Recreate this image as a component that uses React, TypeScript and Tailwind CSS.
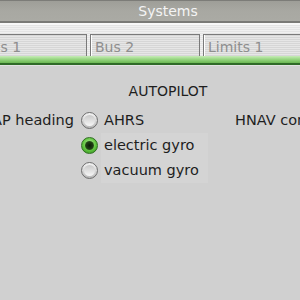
import React from "react";

function Radio({ on }: { on?: boolean }) {
  if (on) {
    return (
      <div className="w-[17px] h-[17px] rounded-full border border-[#2f6e22] bg-[radial-gradient(circle_at_50%_40%,#b6f09a_0%,#5fc23e_55%,#2f8a1c_100%)] flex items-center justify-center shrink-0">
        <div className="w-[9px] h-[9px] rounded-full bg-[radial-gradient(circle,#0c1a08_0%,#1f3d14_55%,#4a8a30_100%)]" />
      </div>
    );
  }
  return (
    <div className="w-[17px] h-[17px] rounded-full border border-[#6e6e6e] bg-[linear-gradient(180deg,#f4f4f4_0%,#d8d8d8_50%,#b8b8b8_100%)] shrink-0 flex items-center justify-center">
      <div className="w-[11px] h-[11px] rounded-full bg-[linear-gradient(180deg,#c8c8c8_0%,#e4e4e4_60%,#f6f6f6_100%)]" />
    </div>
  );
}

export default function App() {
  const font = { fontFamily: '"DejaVu Sans", "Liberation Sans", sans-serif' };
  return (
    <div className="w-[300px] h-[300px] overflow-hidden bg-[#d0d0d0] flex flex-col text-[14.5px]" style={font}>
      {/* title bar */}
      <div className="h-[21px] shrink-0 border-t border-[#7c7c78] bg-[linear-gradient(180deg,#9e9e98_0%,#a8a8a2_50%,#aaaaa4_100%)] flex items-center justify-center pl-[36px]">
        <span className="text-[#f4f4f4] leading-none text-[14px]">Systems</span>
      </div>
      <div className="h-[2px] shrink-0 bg-[#7a7a76]" />
      <div className="h-[2px] shrink-0 bg-[#f8f8f8]" />
      {/* tab strip */}
      <div className="h-[31px] shrink-0 bg-[repeating-linear-gradient(180deg,#e4e4e4_0px,#e4e4e4_1px,#f0f0f0_1px,#f0f0f0_2px)] flex items-end">
        <div className="flex gap-[3px] -ml-[23px] h-[22px]">
          {["Bus 1", "Bus 2", "Limits 1"].map((t) => (
            <div
              key={t}
              className="w-[110px] h-[22px] border-t border-x border-[#7a7a7a] shadow-[inset_1px_0_0_#ffffff] bg-[repeating-linear-gradient(180deg,#d6d6d6_0px,#d6d6d6_1px,#e6e6e6_1px,#e6e6e6_2px)] pl-[4px] pt-[3px] flex items-center text-[#8e8e8e] text-[14px] leading-none"
            >
              {t}
            </div>
          ))}
        </div>
      </div>
      {/* green band */}
      <div className="h-[7px] shrink-0 bg-[linear-gradient(180deg,#c6ecb6_0%,#94d47e_50%,#6ab652_100%)]" />
      <div className="h-[2px] shrink-0 bg-[#2f6a28]" />
      <div className="h-[1px] shrink-0 bg-[#e2e2e2]" />
      {/* content */}
      <div className="flex flex-col text-[#1e1e1e]">
        <div className="pt-[17px] pl-[36px] flex justify-center leading-[16px] text-[14px]">AUTOPILOT</div>
        <div className="mt-[9px] flex">
          <div className="w-[76px] shrink-0 flex justify-end items-start pr-[2px]">
            <div className="h-[25px] flex items-center whitespace-nowrap">AP heading</div>
          </div>
          <div className="w-[132px] shrink-0 pl-[5px] flex flex-col">
            <div className="h-[25px] flex items-center gap-[6px]">
              <Radio />
              <span>AHRS</span>
            </div>
            <div className="h-[25px] flex items-center gap-[3px]">
              <Radio on />
              <span className="bg-[#d4d4d4] flex-1 h-full flex items-center pl-[3px]">electric gyro</span>
            </div>
            <div className="h-[25px] flex items-center gap-[3px]">
              <Radio />
              <span className="bg-[#d4d4d4] flex-1 h-full flex items-center pl-[3px]">vacuum gyro</span>
            </div>
          </div>
          <div className="pl-[27px] h-[25px] flex items-center whitespace-nowrap">HNAV control</div>
        </div>
      </div>
    </div>
  );
}
